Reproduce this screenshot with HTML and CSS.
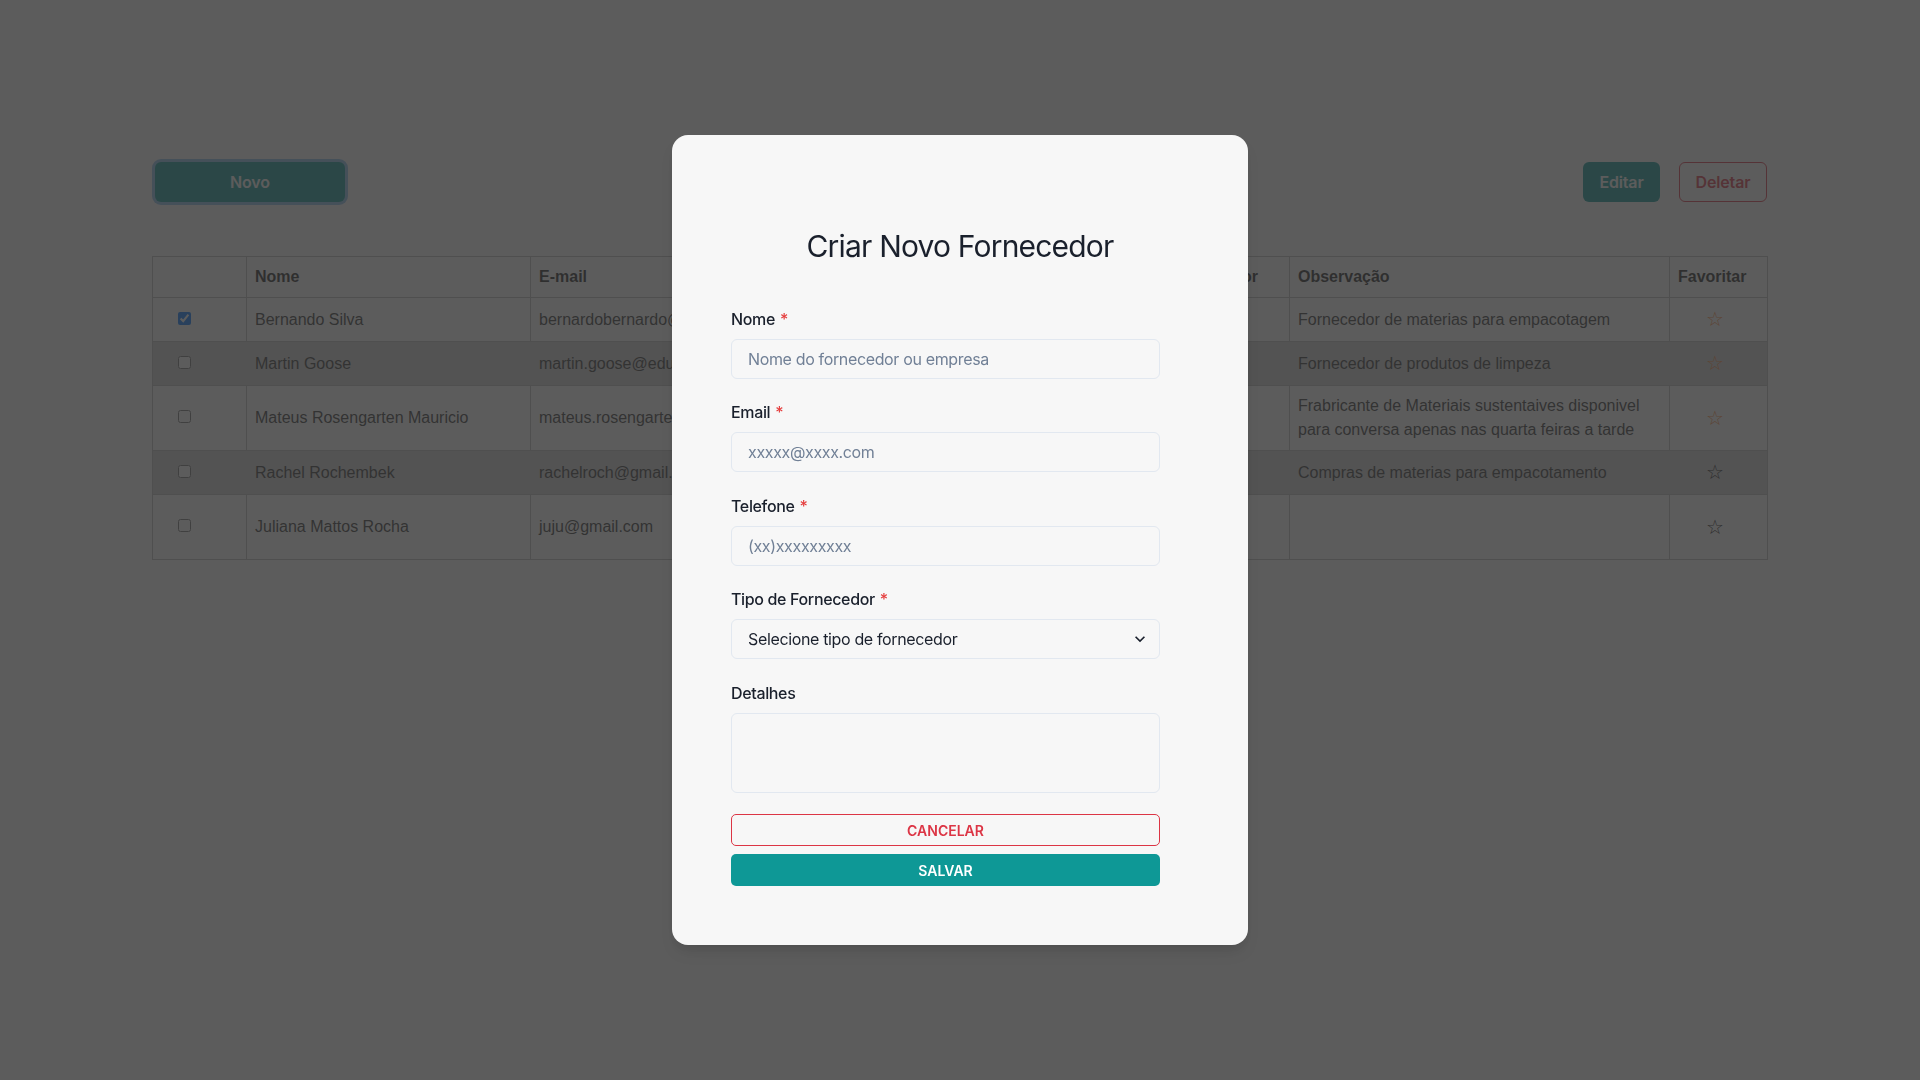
FILE: index.html
```html
<!doctype html>
<html lang="pt-BR">
  <head>
    <meta charset="utf-8">
    <meta name="viewport" content="width=device-width, initial-scale=1">
    <title>Fornecedores</title>
    <link rel="stylesheet" href="styles.css">
  </head>
  <body>
    <div class="page">
      <div class="toolbar">
        <button type="button" class="btn btn-primary btn-novo">Novo</button>
        <div class="actions">
          <button type="button" class="btn btn-primary btn-edit">Editar</button>
          <button type="button" class="btn btn-outline-danger btn-delete">Deletar</button>
        </div>
      </div>

      <table class="suppliers">
        <colgroup>
          <col style="width: 94px">
          <col style="width: 284px">
          <col style="width: 300px">
          <col style="width: 293px">
          <col style="width: 166px">
          <col style="width: 380px">
          <col style="width: 98px">
        </colgroup>
        <thead>
          <tr>
            <th></th>
            <th>Nome</th>
            <th>E-mail</th>
            <th>Telefone</th>
            <th>Tipo Fornecedor</th>
            <th>Observação</th>
            <th>Favoritar</th>
          </tr>
        </thead>
        <tbody>
          <tr>
            <td class="check"><input type="checkbox" checked></td>
            <td>Bernando Silva</td>
            <td>bernardobernardo@gmail.com</td>
            <td>(11)987654321</td>
            <td>Embalagens</td>
            <td>Fornecedor de materias para empacotagem</td>
            <td class="fav"><span class="star on">☆</span></td>
          </tr>
          <tr>
            <td class="check"><input type="checkbox"></td>
            <td>Martin Goose</td>
            <td>martin.goose@educacao.com</td>
            <td>(21)912345678</td>
            <td>Limpeza</td>
            <td>Fornecedor de produtos de limpeza</td>
            <td class="fav"><span class="star on">☆</span></td>
          </tr>
          <tr>
            <td class="check"><input type="checkbox"></td>
            <td>Mateus Rosengarten Mauricio</td>
            <td>mateus.rosengarten@gmail.com</td>
            <td>(31)998877665</td>
            <td>Sustentáveis</td>
            <td>Frabricante de Materiais sustentaives disponivel para conversa apenas nas quarta feiras a tarde</td>
            <td class="fav"><span class="star on">☆</span></td>
          </tr>
          <tr>
            <td class="check"><input type="checkbox"></td>
            <td>Rachel Rochembek</td>
            <td>rachelroch@gmail.com</td>
            <td>(41)955554444</td>
            <td>Embalagens</td>
            <td>Compras de materias para empacotamento</td>
            <td class="fav"><span class="star">☆</span></td>
          </tr>
          <tr>
            <td class="check"><input type="checkbox"></td>
            <td>Juliana Mattos Rocha</td>
            <td>juju@gmail.com</td>
            <td>(51)933332222<br>(51)988887777</td>
            <td>Papelaria</td>
            <td></td>
            <td class="fav"><span class="star">☆</span></td>
          </tr>
        </tbody>
      </table>
    </div>

    <div class="backdrop">
      <div class="dialog" role="dialog" aria-labelledby="dialog-title">
        <h2 id="dialog-title">Criar Novo Fornecedor</h2>

        <form class="form">
          <div class="field">
            <label for="nome">Nome<span class="req">*</span></label>
            <input type="text" id="nome" placeholder="Nome do fornecedor ou empresa">
          </div>

          <div class="field">
            <label for="email">Email<span class="req">*</span></label>
            <input type="email" id="email" placeholder="xxxxx@xxxx.com">
          </div>

          <div class="field">
            <label for="telefone">Telefone<span class="req">*</span></label>
            <input type="tel" id="telefone" placeholder="(xx)xxxxxxxxx">
          </div>

          <div class="field">
            <label for="tipo">Tipo de Fornecedor<span class="req">*</span></label>
            <div class="select-wrap">
              <select id="tipo">
                <option>Selecione tipo de fornecedor</option>
                <option>Embalagens</option>
                <option>Limpeza</option>
                <option>Sustentáveis</option>
              </select>
              <svg class="chevron" viewBox="0 0 24 24" aria-hidden="true">
                <path d="M16.59 8.59L12 13.17 7.41 8.59 6 10l6 6 6-6z"></path>
              </svg>
            </div>
          </div>

          <div class="field">
            <label for="detalhes">Detalhes</label>
            <textarea id="detalhes"></textarea>
          </div>

          <div class="form-buttons">
            <button type="button" class="btn-sm btn-cancel">Cancelar</button>
            <button type="submit" class="btn-sm btn-save">Salvar</button>
          </div>
        </form>
      </div>
    </div>
  </body>
</html>
```

FILE: styles.css
```css
html {
  box-sizing: border-box;
}

*, *:before, *:after {
  box-sizing: inherit;
}

body {
  background: #fff;
  color: #333;
  font-family: "Liberation Sans", Arial, sans-serif;
  font-size: 16px;
  line-height: 1.5;
  margin: 0;
}

.page {
  margin-left: 152px;
  padding-top: 162px;
  width: 1615px;
}

.toolbar {
  align-items: center;
  display: flex;
  justify-content: space-between;
}

.actions {
  display: flex;
  gap: 19px;
}

.btn {
  border: 1px solid transparent;
  border-radius: 6px;
  cursor: pointer;
  font-family: Inter, sans-serif;
  font-size: 16px;
  font-weight: 600;
  height: 40px;
  letter-spacing: -0.01em;
  padding: 0;
}

.btn-primary {
  background: #0e9896;
  color: #fff;
}

.btn-novo {
  box-shadow: 0 0 0 3px rgba(66, 153, 225, 0.6);
  margin-left: 3px;
  width: 190px;
}

.btn-edit {
  width: 77px;
}

.btn-delete {
  width: 88px;
}

.btn-outline-danger {
  background: transparent;
  border-color: #dc3545;
  color: #dc3545;
}

/* table */

.suppliers {
  border-collapse: collapse;
  margin-top: 54px;
  table-layout: fixed;
  width: 100%;
}

.suppliers th,
.suppliers td {
  border: 1px solid #bdbdbd;
  padding: 8px;
  text-align: left;
  vertical-align: middle;
}

.suppliers th {
  color: #1e1e1e;
  font-weight: 700;
}

.suppliers tbody tr:nth-child(even) td {
  background: #cfcfcf;
  border-left-color: #cfcfcf;
  border-right-color: #cfcfcf;
}

.suppliers tbody tr:nth-child(even) td:first-child {
  border-left-color: #bdbdbd;
}

.suppliers tbody tr:nth-child(even) td:last-child {
  border-right-color: #bdbdbd;
}

.suppliers .check {
  padding-left: 21px;
}

.suppliers .fav {
  padding-right: 15px;
  text-align: center;
}

.star {
  color: #151515;
  font-family: "DejaVu Sans", sans-serif;
  font-size: 20px;
  line-height: 27px;
}

.star.on {
  color: #ff8a3c;
}

/* dialog */

.backdrop {
  align-items: center;
  background: rgba(51, 51, 51, 0.8);
  bottom: 0;
  display: flex;
  justify-content: center;
  left: 0;
  position: fixed;
  right: 0;
  top: 0;
}

.dialog {
  background: #f7f7f7;
  border-radius: 16px;
  box-shadow: 0 10px 15px -3px rgba(0, 0, 0, 0.1), 0 4px 6px -2px rgba(0, 0, 0, 0.05);
  color: #1a202c;
  font-family: Inter, sans-serif;
  letter-spacing: -0.022em;
  padding: 93px 0 59px;
  width: 576px;
}

.dialog h2 {
  font-size: 30px;
  font-weight: 400;
  letter-spacing: -0.027em;
  line-height: 36px;
  margin: 0 0 43px;
  text-align: center;
}

.form {
  margin-left: 59px;
  width: 429px;
}

.field {
  margin-bottom: 21.5px;
}

.field label {
  display: block;
  font-weight: 500;
  line-height: 24px;
  margin-bottom: 8px;
}

.req {
  color: #e53e3e;
  margin-left: 5px;
}

.field input,
.field select,
.field textarea {
  appearance: none;
  background: transparent;
  border: 1px solid #e2e8f0;
  border-radius: 6px;
  color: #1a202c;
  display: block;
  font-family: Inter, sans-serif;
  font-size: 16px;
  height: 40px;
  letter-spacing: -0.022em;
  outline: none;
  padding: 0 16px;
  width: 100%;
}

.field select {
  padding-right: 32px;
}

.field textarea {
  height: 80px;
  padding: 8px 16px;
  resize: none;
}

::placeholder {
  color: #718096;
  opacity: 1;
}

.select-wrap {
  position: relative;
}

.chevron {
  fill: #1a202c;
  height: 20px;
  pointer-events: none;
  position: absolute;
  right: 10px;
  top: 10px;
  width: 20px;
}

.form-buttons {
  display: flex;
  flex-direction: column;
  gap: 8px;
}

.btn-sm {
  border: 1px solid transparent;
  border-radius: 5px;
  cursor: pointer;
  font-family: Inter, sans-serif;
  font-size: 14px;
  font-weight: 600;
  height: 32px;
  letter-spacing: 0;
  text-transform: uppercase;
  width: 100%;
}

.btn-cancel {
  background: transparent;
  border-color: #dc3545;
  color: #dc3545;
}

.btn-save {
  background: #0e9896;
  color: #fff;
}
```
